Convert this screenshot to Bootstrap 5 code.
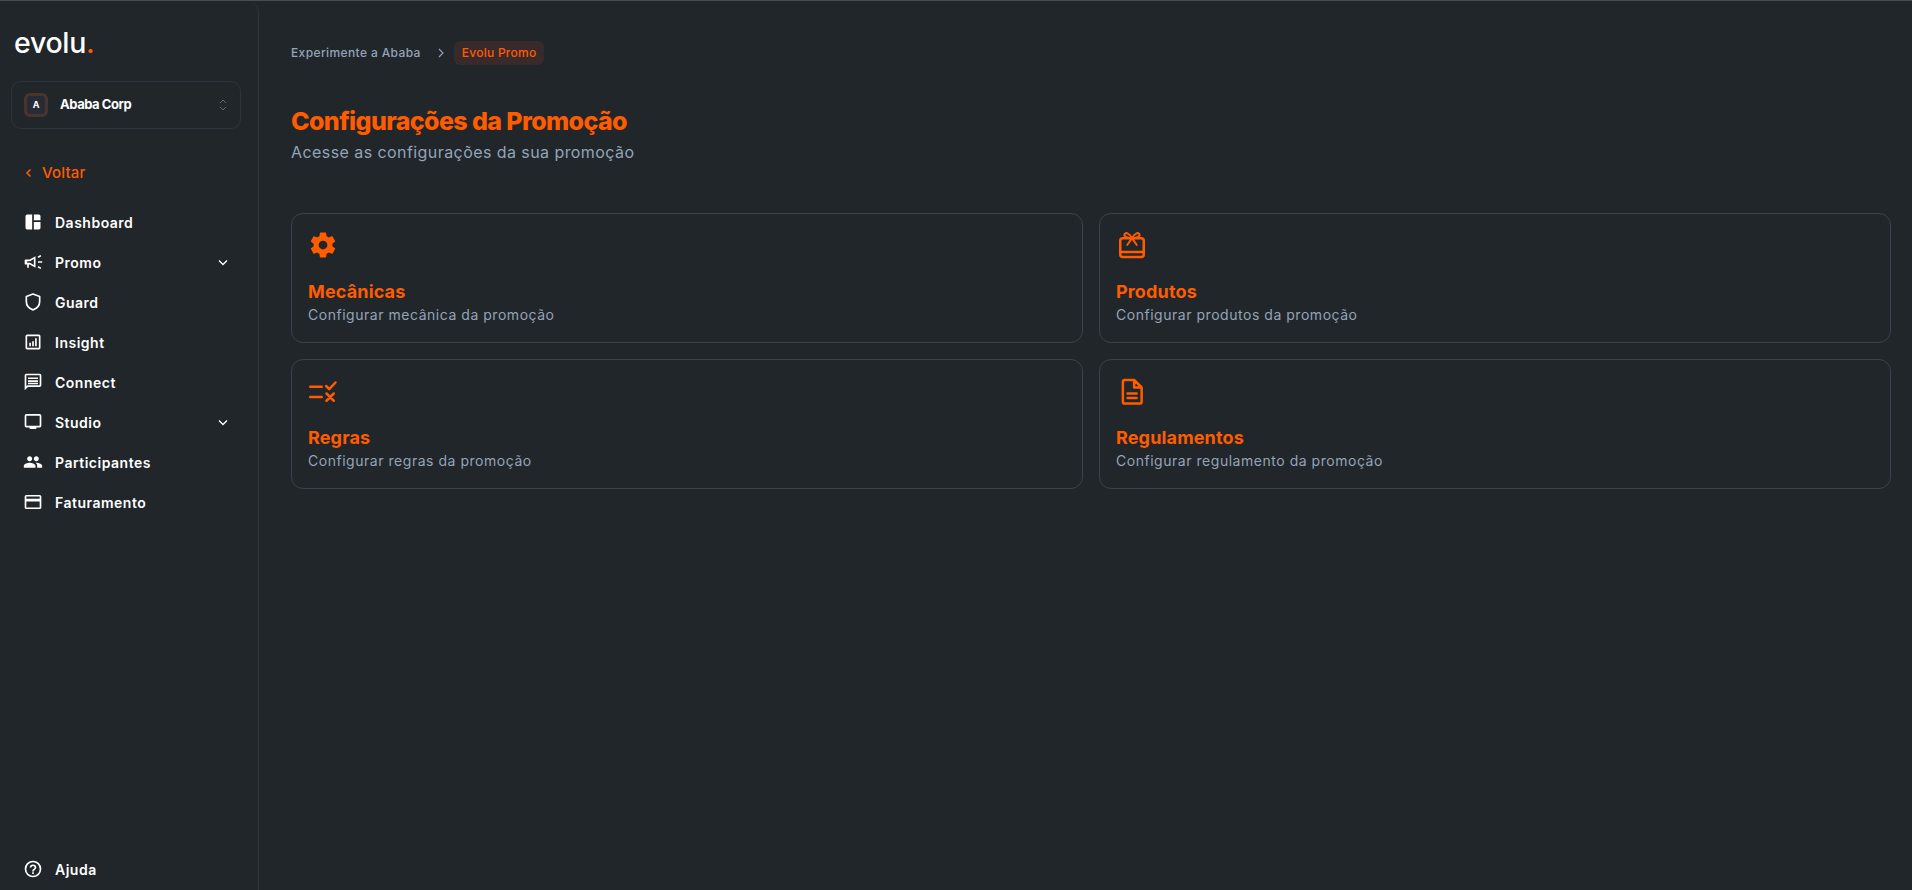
<!DOCTYPE html>
<html lang="pt-BR">
<head>
<meta charset="utf-8">
<title>Configurações da Promoção</title>
<link href="https://cdn.jsdelivr.net/npm/bootstrap@5.3.0/dist/css/bootstrap.min.css" rel="stylesheet">
<style>
html,body{height:100%}
body{background:#21262a;font-family:Inter,"Liberation Sans",sans-serif;overflow:hidden;border-top:1px solid #4a4c52}
.shell{height:889px}
.side{width:259px;flex:none;border-right:1px solid #2e343a;border-top-right-radius:12px;padding:0 17px 0 11px}
.logo{font-weight:500;font-size:28.5px;line-height:36px;color:#fff;margin:24px 0 -1px 3px;letter-spacing:-.3px}
.logo span{color:#ff5c00}
.switcher{height:48px;margin-top:21px;border:1px solid #2d3340;border-radius:10px;padding:0 13px 0 12px}
.avatar{width:24px;height:24px;border-radius:6px;background:#262b36;border:3px solid #4a352d;color:#fff;font-size:9px;font-weight:700}
.corp{color:#fff;font-size:13px;font-weight:700;letter-spacing:-.45px;margin-left:12px}
.back{color:#ff5c00;font-size:15px;font-weight:500;margin:33px 0 0 14px;height:22px;gap:10px;letter-spacing:.2px}
.menu{margin-top:18px}
.item{height:40px;color:#fff;font-size:14px;font-weight:600;padding:0 13px 0 12px;gap:12px;letter-spacing:.5px}
.item svg.ic{width:20px;height:20px;flex:none;fill:currentColor}
.item svg.ic.outline{fill:none;stroke:#fff;stroke-width:2;stroke-linejoin:round}
.help{margin-bottom:1px}
.main{padding:41px 21px 0 32px;min-width:0}
.crumb{font-size:12px;font-weight:500;color:#94a3b8;height:22px;letter-spacing:.38px}
.pill{color:#ff5c00;background:#38292a;border-radius:6px;padding:0 8px;height:24px;letter-spacing:.25px}
.sep{margin:0 9px 0 17px}
.ttl{color:#ff5c00;font-size:25px;font-weight:800;letter-spacing:-.6px;line-height:32px;margin:41px 0 0}
.sub{color:#94a3b8;font-size:16px;line-height:22px;margin:4px 0 0;letter-spacing:.43px}
.grid-cards{margin-top:50px;display:grid;grid-template-columns:1fr 1fr;gap:16px}
.tile{height:130px;background:transparent;border:1px solid #3a4250;border-radius:12px;padding:16px}
.tile svg{width:30px;height:30px;display:block;fill:#ff5c00}
.tile svg.outline{fill:none;stroke:#ff5c00;stroke-width:2;stroke-linejoin:round;stroke-linecap:round}
.tile h3{color:#ff5c00;font-size:18px;font-weight:700;line-height:24px;margin:20px 0 0;letter-spacing:.15px}
.tile p{color:#94a3b8;font-size:14px;line-height:20px;margin:1px 0 0;letter-spacing:.53px}
</style>
</head>
<body>
<div class="d-flex shell">
  <aside class="side d-flex flex-column">
    <div class="logo">evolu<span>.</span></div>
    <div class="switcher d-flex align-items-center">
      <div class="avatar d-flex align-items-center justify-content-center">A</div>
      <div class="corp flex-grow-1">Ababa Corp</div>
      <svg width="8" height="12" viewBox="0 0 8 12" fill="none" stroke="#5f6670" stroke-width="1"><path d="M1 4l3-3 3 3M1 8l3 3 3-3"/></svg>
    </div>
    <div class="back d-flex align-items-center">
      <svg width="7" height="10" viewBox="0 0 7 10" fill="none" stroke="#ff5c00" stroke-width="1.5"><path d="M5.5 1.500L2 5l3.500 3.500"/></svg>
      <span>Voltar</span>
    </div>
    <nav class="menu d-flex flex-column">
      <div class="item d-flex align-items-center"><svg class="ic" viewBox="0 0 24 24"><path d="M3 5a2 2 0 0 1 2-2h6v18H5a2 2 0 0 1-2-2zM13 3h6a2 2 0 0 1 2 2v5h-8zM13 12h8v7a2 2 0 0 1-2 2h-6z"/></svg><span>Dashboard</span></div>
      <div class="item d-flex align-items-center"><svg class="ic" viewBox="0 0 24 24"><path d="M3 9h5l7-4v14l-7-4H7v4H5v-4H3a1 1 0 0 1-1-1v-4a1 1 0 0 1 1-1zm2 2v2h3.500L13 15.500v-7L8.500 11z" fill-rule="evenodd"/><path d="M18 11h5v2h-5zM17.500 5.500l3.500-2 1 1.700-3.500 2zM17.500 18.500l1-1.700 3.500 2-1 1.700z"/></svg><span class="flex-grow-1">Promo</span><svg width="10" height="7" viewBox="0 0 10 7" fill="none" stroke="#fff" stroke-width="1.300"><path d="M1 1.500l4 4 4-4"/></svg></div>
      <div class="item d-flex align-items-center"><svg class="ic outline" viewBox="0 0 24 24"><path d="M12 2.500l8 3v6c0 5-3.400 8.500-8 10-4.600-1.500-8-5-8-10v-6z"/></svg><span>Guard</span></div>
      <div class="item d-flex align-items-center"><svg class="ic" viewBox="0 0 24 24"><path d="M3 5a2 2 0 0 1 2-2h14a2 2 0 0 1 2 2v14a2 2 0 0 1-2 2H5a2 2 0 0 1-2-2zm2 0v14h14V5zM7.500 13h2v4h-2zM11 11h2v6h-2zM14.500 7.500h2V17h-2z" fill-rule="evenodd"/></svg><span>Insight</span></div>
      <div class="item d-flex align-items-center"><svg class="ic" viewBox="0 0 24 24"><path d="M4 2h16a2 2 0 0 1 2 2v12a2 2 0 0 1-2 2H6l-4 4V4a2 2 0 0 1 2-2zm0 2v13l1.200-1H20V4zM6 6.500h12v2H6zM6 10h12v2H6zM6 13h12v1.700H6z" fill-rule="evenodd"/></svg><span>Connect</span></div>
      <div class="item d-flex align-items-center"><svg class="ic" viewBox="0 0 24 24"><path d="M4 2.500h16a2 2 0 0 1 2 2v12a2 2 0 0 1-2 2h-4v2H8v-2H4a2 2 0 0 1-2-2v-12a2 2 0 0 1 2-2zm0 2v12h16v-12z" fill-rule="evenodd"/></svg><span class="flex-grow-1">Studio</span><svg width="10" height="7" viewBox="0 0 10 7" fill="none" stroke="#fff" stroke-width="1.300"><path d="M1 1.500l4 4 4-4"/></svg></div>
      <div class="item d-flex align-items-center"><svg class="ic" viewBox="0 0 24 24"><path d="M16 11c1.700 0 3-1.300 3-3s-1.300-3-3-3-3 1.300-3 3 1.300 3 3 3zm-8 0c1.700 0 3-1.300 3-3S9.700 5 8 5 5 6.300 5 8s1.300 3 3 3zm0 2c-2.300 0-7 1.200-7 3.500V19h14v-2.500C15 14.200 10.300 13 8 13zm8 0h-1c1.200.9 2 2 2 3.500V19h6v-2.500c0-2.300-4.700-3.500-7-3.500z"/></svg><span>Participantes</span></div>
      <div class="item d-flex align-items-center"><svg class="ic" viewBox="0 0 24 24"><path d="M4 3.500h16a2 2 0 0 1 2 2v13a2 2 0 0 1-2 2H4a2 2 0 0 1-2-2v-13a2 2 0 0 1 2-2zm0 2v2.500h16V5.500zm0 6v7h16v-7z" fill-rule="evenodd"/></svg><span>Faturamento</span></div>
    </nav>
    <div class="item help d-flex align-items-center mt-auto"><svg class="ic" viewBox="0 0 24 24"><path d="M12 2a10 10 0 1 0 0 20 10 10 0 0 0 0-20zm0 2a8 8 0 1 1 0 16 8 8 0 0 1 0-16z" fill-rule="evenodd"/><path d="M11 16h2v2h-2zM12 6.500a4 4 0 0 1 4 3.800c0 2.500-3 2.700-3 4.700h-2c0-3 3-3.200 3-4.700a2 2 0 0 0-4 0H8a4 4 0 0 1 4-3.800z"/></svg><span>Ajuda</span></div>
  </aside>
  <main class="main flex-grow-1">
    <div class="crumb d-flex align-items-center">
      <span>Experimente a Ababa</span>
      <svg class="sep" width="7" height="10" viewBox="0 0 7 10" fill="none" stroke="#94a3b8" stroke-width="1.100"><path d="M1 1l4 4-4 4"/></svg>
      <span class="pill d-flex align-items-center">Evolu Promo</span>
    </div>
    <h1 class="ttl">Configurações da Promoção</h1>
    <p class="sub">Acesse as configurações da sua promoção</p>
    <div class="grid-cards">
      <div class="tile">
        <svg viewBox="0 0 24 24"><path d="M19.430 12.980a7.800 7.800 0 0 0 0-1.960l2.110-1.650a.5.500 0 0 0 .12-.64l-2-3.460a.5.500 0 0 0-.61-.22l-2.490 1a7.300 7.300 0 0 0-1.690-.98l-.38-2.650A.49.490 0 0 0 14 2h-4a.49.490 0 0 0-.49.420l-.38 2.650c-.61.250-1.170.590-1.690.980l-2.490-1a.49.490 0 0 0-.61.220l-2 3.460a.49.490 0 0 0 .12.640l2.110 1.650a7.900 7.900 0 0 0 0 1.960l-2.110 1.650a.5.500 0 0 0-.12.640l2 3.460c.12.220.39.300.61.220l2.490-1c.52.400 1.080.730 1.690.980l.38 2.650c.03.240.24.420.49.420h4c.25 0 .46-.18.49-.42l.38-2.650c.61-.25 1.170-.59 1.690-.98l2.490 1c.23.090.49 0 .61-.22l2-3.460a.5.500 0 0 0-.12-.64zM12 15.500a3.500 3.500 0 1 1 0-7 3.500 3.500 0 0 1 0 7z"/></svg>
        <h3>Mecânicas</h3>
        <p>Configurar mecânica da promoção</p>
      </div>
      <div class="tile">
        <svg class="outline" viewBox="0 0 24 24"><rect x="3.400" y="6.500" width="18.800" height="15" rx="2"/><path d="M3.400 17.500h18.800"/><path d="M12.800 6.500C10.500 2.500 7.500 1.500 6.800 3.500 6.200 5.500 9.500 6.500 12.800 6.500zM12.800 6.500c2.300-4 5.300-5 6-3 .6 2-2.700 3-6 3zM12.800 6.500l-3.800 5.500M12.800 6.500l3.800 5.500" stroke-width="1.600"/></svg>
        <h3>Produtos</h3>
        <p>Configurar produtos da promoção</p>
      </div>
      <div class="tile">
        <svg class="outline" viewBox="0 0 24 24"><path d="M1.800 8.500h9.200M1.800 16.800h9.200M14.500 8l2.500 2.500 5-5.300M14.800 14l5.800 5.800M20.600 14l-5.800 5.800"/></svg>
        <h3>Regras</h3>
        <p>Configurar regras da promoção</p>
      </div>
      <div class="tile">
        <svg class="outline" viewBox="0 0 24 24"><path d="M7 3.200h7.500l6 6v11.300a1.500 1.500 0 0 1-1.500 1.500H7a1.500 1.500 0 0 1-1.500-1.500V4.700A1.500 1.500 0 0 1 7 3.200zM14.500 3.200v6h6M9.200 14h7.300M9.200 17.600h7.300"/></svg>
        <h3>Regulamentos</h3>
        <p>Configurar regulamento da promoção</p>
      </div>
    </div>
  </main>
</div>
</body>
</html>
